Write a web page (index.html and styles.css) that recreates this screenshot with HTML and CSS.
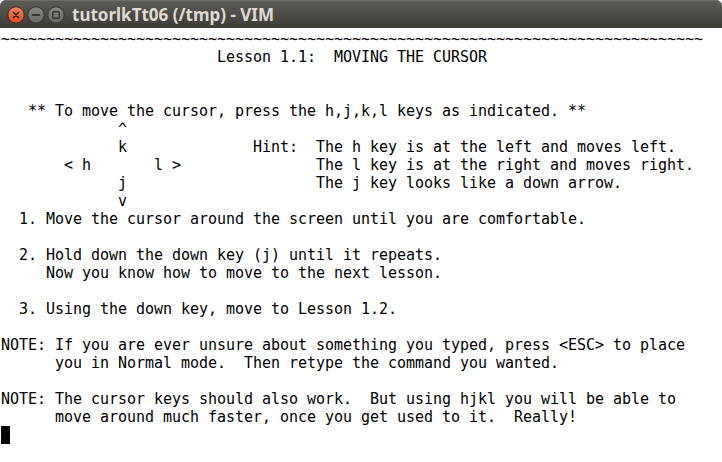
FILE: index.html
```html
<!DOCTYPE html>
<html>
<head>
<meta charset="utf-8">
<link rel="stylesheet" href="styles.css">
<title>VIM</title>
</head>
<body>
<div class="window">
  <div class="titlebar">
    <div class="buttons">
      <svg class="btn" width="18" height="18" viewBox="0 0 18 18">
        <defs>
          <linearGradient id="gc" x1="0" y1="0" x2="0" y2="1">
            <stop offset="0" stop-color="#f4875f"/>
            <stop offset="1" stop-color="#df4a1c"/>
          </linearGradient>
          <linearGradient id="gg" x1="0" y1="0" x2="0" y2="1">
            <stop offset="0" stop-color="#8a8883"/>
            <stop offset="1" stop-color="#6a6964"/>
          </linearGradient>
        </defs>
        <circle cx="9" cy="9" r="8.2" fill="url(#gc)" stroke="#3a2a22" stroke-width="1"/>
        <path d="M6.3 6.3 L11.7 11.7 M11.7 6.3 L6.3 11.7" stroke="#3b2216" stroke-width="1.6" stroke-linecap="round"/>
      </svg>
      <svg class="btn" width="18" height="18" viewBox="0 0 18 18">
        <circle cx="9" cy="9" r="8.2" fill="url(#gg)" stroke="#34332f" stroke-width="1"/>
        <path d="M5.5 9 H12.5" stroke="#393834" stroke-width="1.8" stroke-linecap="round"/>
      </svg>
      <svg class="btn" width="18" height="18" viewBox="0 0 18 18">
        <circle cx="9" cy="9" r="8.2" fill="url(#gg)" stroke="#34332f" stroke-width="1"/>
        <rect x="5.8" y="5.8" width="6.4" height="6.4" rx="0.8" fill="none" stroke="#393834" stroke-width="1.5"/>
      </svg>
    </div>
    <div class="title">tutorlkTt06 (/tmp) - VIM</div>
  </div>
  <div class="editor">
<pre class="text">~~~~~~~~~~~~~~~~~~~~~~~~~~~~~~~~~~~~~~~~~~~~~~~~~~~~~~~~~~~~~~~~~~~~~~~~~~~~~~
                        Lesson 1.1:  MOVING THE CURSOR


   ** To move the cursor, press the h,j,k,l keys as indicated. **
             ^
             k              Hint:  The h key is at the left and moves left.
       &lt; h       l &gt;               The l key is at the right and moves right.
             j                     The j key looks like a down arrow.
             v
  1. Move the cursor around the screen until you are comfortable.

  2. Hold down the down key (j) until it repeats.
     Now you know how to move to the next lesson.

  3. Using the down key, move to Lesson 1.2.

NOTE: If you are ever unsure about something you typed, press &lt;ESC&gt; to place
      you in Normal mode.  Then retype the command you wanted.

NOTE: The cursor keys should also work.  But using hjkl you will be able to
      move around much faster, once you get used to it.  Really!
<span class="cursor"> </span></pre>
  </div>
</div>
</body>
</html>
```
FILE: styles.css
```css
html, body {
  margin: 0;
  padding: 0;
  background: #ffffff;
}

.window {
  width: 722px;
  height: 462px;
  display: flex;
  flex-direction: column;
  background: #ffffff;
  overflow: hidden;
}

.titlebar {
  height: 28px;
  flex: 0 0 28px;
  display: flex;
  align-items: center;
  background: linear-gradient(to bottom, #5e5c57 0%, #4c4b47 50%, #3d3c38 100%);
  border-radius: 6px 6px 0 0;
  box-shadow: inset 0 1px 0 #6f6d68;
  box-sizing: border-box;
  padding: 1px 0 0 7px;
}

.buttons {
  display: flex;
  gap: 2px;
  align-items: center;
}

.btn {
  display: block;
}

.title {
  margin-left: 7px;
  font-family: "Noto Sans", "Open Sans", sans-serif;
  font-weight: bold;
  font-size: 17px;
  color: #dfdbd2;
  letter-spacing: 0px;
  line-height: 28px;
}

.editor {
  flex: 1;
  background: #ffffff;
  padding: 2px 0 0 1px;
}

.text {
  margin: 0;
  font-family: "DejaVu Sans Mono", "Liberation Mono", monospace;
  font-size: 15px;
  line-height: 18px;
  letter-spacing: -0.031px;
  color: #000000;
  white-space: pre;
}

.cursor {
  display: inline-block;
  width: 9px;
  height: 18px;
  background: #000000;
  vertical-align: top;
}
```
